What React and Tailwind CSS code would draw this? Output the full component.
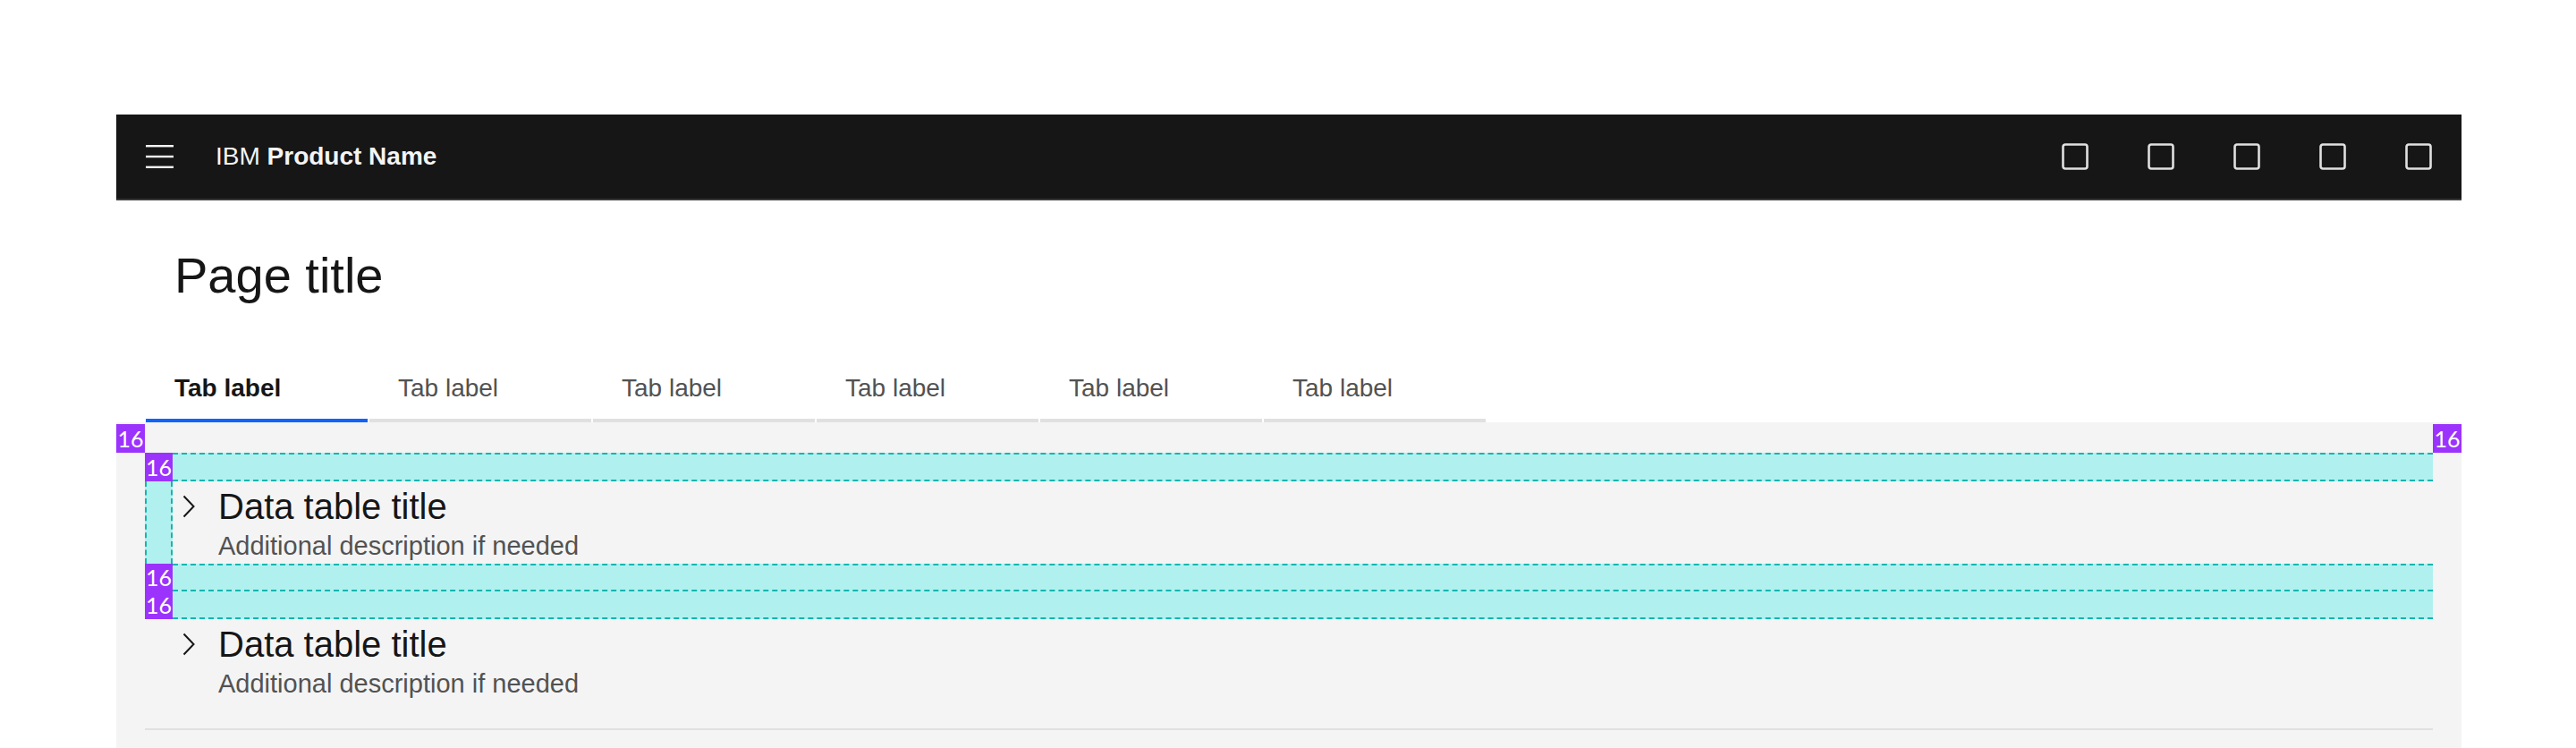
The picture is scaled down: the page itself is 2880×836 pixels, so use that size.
import React from "react";

const CYAN = "bg-[#b0f1f0]";

function Label({ className = "" }) {
  return (
    <div
      className={`flex items-center justify-center bg-[#9c33fd] text-white text-[25px] leading-none ${className}`}
      style={{ fontFamily: "Lato, 'Open Sans', sans-serif" }}
    >
      16
    </div>
  );
}

function Chevron() {
  return (
    <svg width="14" height="26" viewBox="0 0 14 26" fill="none" aria-hidden="true">
      <polyline points="1.5,1.5 12.5,13 1.5,24.5" stroke="#161616" strokeWidth="2" />
    </svg>
  );
}

function Block() {
  return (
    <div className="flex flex-1 items-start pl-[11px]">
      <div className="flex h-[56px] items-center">
        <Chevron />
      </div>
      <div className="ml-[26px] flex flex-col">
        <div className="text-[40px] leading-[56px] text-[#161616]">Data table title</div>
        <div className="text-[29px] leading-[32px] text-[#525252]">Additional description if needed</div>
      </div>
    </div>
  );
}

function SquareIcon() {
  return (
    <svg width="30" height="30" viewBox="0 0 30 30" fill="none" aria-hidden="true">
      <rect x="1.5" y="1.5" width="27" height="27" rx="2.5" stroke="#e0e0e0" strokeWidth="2.6" />
    </svg>
  );
}

export default function App() {
  const tabs = ["Tab label", "Tab label", "Tab label", "Tab label", "Tab label", "Tab label"];
  return (
    <div
      className="min-h-[836px] bg-white pt-[128px] pl-[130px] pr-[128px]"
      style={{ fontFamily: "'Liberation Sans', Arial, sans-serif" }}
    >
      <header className="flex h-[96px] items-center border-b-2 border-[#393939] bg-[#161616]">
        <div className="flex h-full w-[96px] items-center justify-center">
          <svg width="31" height="26" viewBox="0 0 31 26" fill="none" aria-hidden="true">
            <rect x="0" y="0" width="31" height="2.4" fill="#f4f4f4" />
            <rect x="0" y="11.8" width="31" height="2.4" fill="#f4f4f4" />
            <rect x="0" y="23.6" width="31" height="2.4" fill="#f4f4f4" />
          </svg>
        </div>
        <div className="pl-[15px] text-[28px] leading-none text-[#f4f4f4]">
          IBM <span className="font-semibold">Product Name</span>
        </div>
        <div className="ml-auto flex h-full">
          {[0, 1, 2, 3, 4].map((i) => (
            <div key={i} className="flex h-full w-[96px] items-center justify-center">
              <SquareIcon />
            </div>
          ))}
        </div>
      </header>

      <div className="bg-white">
        <h1 className="pt-[52px] pl-[65px] text-[56px] font-normal leading-[64px] text-[#161616]">
          Page title
        </h1>
        <div className="mt-[60px] ml-[33px] flex gap-[2px]">
          {tabs.map((t, i) => (
            <div
              key={i}
              className={`w-[248px] border-b-4 pt-[14px] pb-[14px] pl-[32px] text-[28px] leading-[40px] ${
                i === 0
                  ? "border-[#0f62fe] font-semibold text-[#161616]"
                  : "border-[#e0e0e0] text-[#525252]"
              }`}
            >
              {t}
            </div>
          ))}
        </div>
      </div>

      <div className="relative bg-[#f4f4f4] px-[32px] pt-[34px] pb-[60px]">
        <Label className="absolute left-0 top-[2px] h-[32px] w-[32px]" />
        <Label className="absolute right-0 top-[2px] h-[32px] w-[32px]" />

        <div className="flex flex-col">
          <div className="flex h-[32px]">
            <Label className="h-[32px] w-[31px]" />
            <div className={`flex-1 border-y-2 border-dashed border-[#14b5ae] ${CYAN}`} />
          </div>
          <div className="flex h-[92px]">
            <div className={`w-[31px] border-x-2 border-dashed border-[#14b5ae] ${CYAN}`} />
            <Block />
          </div>
          <div className="flex h-[62px]">
            <div className="flex w-[31px] flex-col">
              <Label className="h-[31px] w-[31px]" />
              <Label className="h-[31px] w-[31px]" />
            </div>
            <div className="flex flex-1 flex-col">
              <div className={`h-[31px] border-y-2 border-dashed border-[#14b5ae] ${CYAN}`} />
              <div className={`h-[31px] border-b-2 border-dashed border-[#14b5ae] ${CYAN}`} />
            </div>
          </div>
        </div>

        <div className="flex h-[92px]">
          <div className="w-[31px]" />
          <Block />
        </div>

        <div className="mt-[30px] h-[2px] bg-[#e0e0e0]" />
      </div>
    </div>
  );
}
